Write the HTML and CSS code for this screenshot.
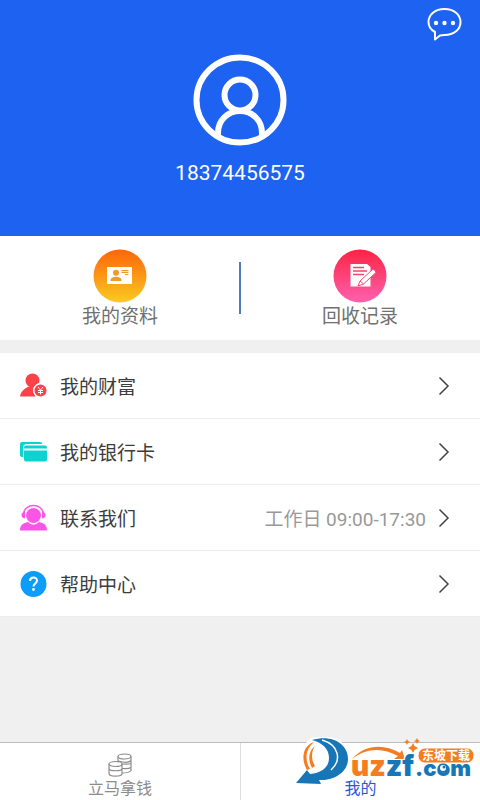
FILE: index.html
```html
<!DOCTYPE html>
<html lang="zh-CN">
<head>
<meta charset="utf-8">
<meta name="viewport" content="width=device-width, initial-scale=1">
<title>我的</title>
<link rel="stylesheet" href="styles.css">
</head>
<body>
<header class="profile">
  <button class="chat" type="button" aria-label="消息">
    <svg width="36" height="36" viewBox="0 0 36 36" fill="none">
      <path d="M9 27C5 25 2.500 21.500 2.500 17C2.500 9.500 9 4 18.500 4S34.500 9.500 34.500 17S28 30 18.500 30Q16 30 14 30.500Q12 32 9 34.500Z" transform="translate(0 -1)" stroke="#fff" stroke-width="2" stroke-linejoin="round"/>
      <g fill="#fff"><circle cx="10" cy="17" r="2.200"/><circle cx="18.500" cy="17" r="2.200"/><circle cx="27" cy="17" r="2.200"/></g>
    </svg>
  </button>
  <svg class="avatar" width="94" height="92" viewBox="0 0 94 92" fill="none" stroke="#fff" stroke-width="6">
    <ellipse cx="47" cy="46" rx="43.500" ry="42.500"/>
    <circle cx="47" cy="41" r="15.500"/>
    <path d="M25 82V79C25 66 35 57 47 57S69 66 69 79V82"/>
  </svg>
  <p class="phone">18374456575</p>
</header>

<nav class="shortcuts">
  <a class="shortcut" href="#info">
    <svg width="54" height="54" viewBox="0 0 54 54">
      <defs><linearGradient id="orange" x2="0" y2="1"><stop stop-color="#ff6508"/><stop offset="1" stop-color="#f9cb20"/></linearGradient></defs>
      <circle cx="27" cy="27" r="26.500" fill="url(#orange)"/>
      <path fill="#fff" d="M14 18H39V35H14Z"/>
      <g fill="#f09a28"><circle cx="23" cy="23.800" r="3"/><path d="M17.500 31.500C17.500 26.500 28.500 26.500 28.500 31.500V32H17.500Z"/><path d="M28.500 21H35.500V22.200H28.500ZM28.500 23H35.500V24H28.500ZM32 25H35.500V26H32Z"/></g>
    </svg>
    <span>我的资料</span>
  </a>
  <a class="shortcut" href="#records">
    <svg width="54" height="54" viewBox="0 0 54 54">
      <defs><linearGradient id="pink" x2="0" y2="1"><stop stop-color="#fb2443"/><stop offset="1" stop-color="#ff61af"/></linearGradient></defs>
      <circle cx="27" cy="27" r="26.500" fill="url(#pink)"/>
      <path fill="#fff" d="M17.500 15H34L37.500 18V37.500H17.500Z"/>
      <path stroke="#fb4268" stroke-width="1.600" d="M20 18.500H31M20 22H34M20 25.500H31"/>
      <path fill="#fff" stroke="#fb4872" stroke-width="1" stroke-linejoin="round" d="M25 37L27 32L39.500 20.500Q42 20 43 23.500L30.500 35Z"/>
      <path stroke="#fb4872" stroke-width="1" d="M27 32L30.500 35"/>
    </svg>
    <span>回收记录</span>
  </a>
</nav>

<main class="menu">
  <a class="row" href="#wealth">
    <svg width="28" height="28" viewBox="0 0 28 28">
      <g fill="#fb4248"><circle cx="12.500" cy="8.500" r="7"/><path d="M0 24.500C1 18 6 16 9 14.500H16L20 18L15 24.500Z"/></g>
      <circle cx="20.500" cy="18.500" r="6.800" fill="#fb4248" stroke="#fff" stroke-width="1.500"/>
      <path d="M18 15L20.500 18L23 15M18 18.500H23M18 20.500H23M20.500 18V22.500" fill="none" stroke="#fff"/>
    </svg>
    <span class="label">我的财富</span>
    <svg class="arrow" width="12" height="20" viewBox="0 0 12 20"><path d="M1.500 1.500L10 10L1.500 18.500"/></svg>
  </a>
  <a class="row" href="#cards">
    <svg width="28" height="28" viewBox="0 0 28 28" fill="#0bd3cf">
      <path d="M2 4H20Q22 4 22.500 6H7Q3 6 3 10V19Q0 19 0 17V6Q0 4 2 4Z"/>
      <path d="M6 7.500H25Q27 7.500 27 9.500V10.500H4V9.500Q4 7.500 6 7.500Z"/>
      <path d="M4 12.500H27V21.500Q27 23.500 25 23.500H6Q4 23.500 4 21.500Z"/>
    </svg>
    <span class="label">我的银行卡</span>
    <svg class="arrow" width="12" height="20" viewBox="0 0 12 20"><path d="M1.500 1.500L10 10L1.500 18.500"/></svg>
  </a>
  <a class="row" href="#contact">
    <svg width="28" height="28" viewBox="0 0 28 28" fill="#fc55e5">
      <circle cx="13.500" cy="11.500" r="7.500"/>
      <path d="M3.500 10.500C4 -1.500 23 -1.500 23.500 10.500" fill="none" stroke="#fc55e5" stroke-width="1.500"/>
      <path d="M5 8V14.500Q1.500 14 1.500 11T5 8ZM22 8V14.500Q25.500 14 25.500 11T22 8Z"/>
      <path d="M0 26.500C0 21 3 19 8 18Q13.500 23.500 19 18C24 19 27 21 27 26.500Z"/>
    </svg>
    <span class="label">联系我们</span>
    <span class="hours">工作日 09:00-17:30</span>
    <svg class="arrow" width="12" height="20" viewBox="0 0 12 20"><path d="M1.500 1.500L10 10L1.500 18.500"/></svg>
  </a>
  <a class="row" href="#help">
    <svg width="28" height="28" viewBox="0 0 28 28">
      <circle cx="13.500" cy="14" r="13" fill="#0c9cf9"/>
      <path d="M10 11C10 6.500 17 6.500 17 10.500C17 13.500 13.500 13.500 13.500 16.500" fill="none" stroke="#fff" stroke-width="2"/>
      <circle cx="13.500" cy="19.500" r="1.400" fill="#fff"/>
    </svg>
    <span class="label">帮助中心</span>
    <svg class="arrow" width="12" height="20" viewBox="0 0 12 20"><path d="M1.500 1.500L10 10L1.500 18.500"/></svg>
  </a>
</main>

<footer class="tabs">
  <a class="tab" href="#money">
    <svg width="24" height="24" viewBox="0 0 24 24" fill="none" stroke="#8c8c8c" stroke-width="1.200">
      <ellipse cx="16.500" cy="3.500" rx="6.500" ry="2.500"/>
      <path d="M10 3.500V9M23 3.500V17.500Q21 20 14 20M10.500 8Q20 11 23 7.500M14 11Q21 11.500 23 10.500M14 15.500Q21 16 23 14.500"/>
      <ellipse cx="7.500" cy="11" rx="6.500" ry="2.500"/>
      <path d="M1 11V20.500C1 24 14 24 14 20.500V11M1 15.500C1 18.500 14 18.500 14 15.500"/>
    </svg>
    <span>立马拿钱</span>
  </a>
  <a class="tab active" href="#me"><span>我的</span></a>
  <svg class="badge" width="184" height="54" viewBox="0 0 184 54">
    <path fill="#fff" d="M16 1C36-5 55 5 55 22C55 37 40 47 25 47L0 47L10 32C4 20 8 6 16 1Z"/>
    <path fill="#f57c20" d="M19 5C7 9 6 23 12 33L15 32C9 22 11 12 19 5ZM20 9C13 14 13 24 17 31L20 29C16 22 16 15 20 9Z"/>
    <path fill="#1676b8" d="M17 3C36-3 53 6 53 22C53 35 39 44 24 43L26 47L1 46L12 33L15 37C27 36 34 30 34 21C34 12 28 6 17 3Z"/>
    <path fill="none" stroke="#fff" stroke-width="1.500" d="M27 3C44 8 47 23 36 33"/>
    <path fill="#f57c20" d="M57 22C69 8 88 6 105 16L107 13L110 22L99 22L103 19C87 10 71 11 57 22Z"/>
    <g fill="#f57c20"><path d="M118 6L119.500 9L123 11L119.500 13L118 16L116.500 13L113 11L116.500 9Z"/><path d="M112 2L113 4L115 5L113 6L112 8L111 6L109 5L111 4Z"/><path d="M122 1L123 3L125 4L123 5L122 7L121 5L119 4L121 3Z"/></g>
    <g class="wordmark" stroke="#fff" stroke-width="2" paint-order="stroke">
      <text class="word" x="56" y="39" fill="#f57c20">uz<tspan fill="#1676b8">zf</tspan></text>
      <text class="domain" x="120" y="39" fill="#1676b8">.com</text>
    </g>
    <circle cx="148" cy="31" r="5" fill="#1676b8"/><circle cx="148" cy="31" r="3" fill="#fff"/><circle cx="149" cy="30" r="1.500" fill="#1676b8"/>
    <rect x="123" y="11" width="56" height="15" rx="7" fill="#f57c20" stroke="#fff"/>
    <text class="stamp" x="127" y="23" fill="#fff">东坡下载</text>
  </svg>
</footer>
</body>
</html>
```
FILE: styles.css
```css
* {
  box-sizing: border-box;
}

body {
  margin: 0;
  min-height: 100vh;
  display: flex;
  flex-direction: column;
  background: #f0f0f0;
  font-family: Roboto, "Noto Sans CJK SC", sans-serif;
  font-size: 19px;
  line-height: 28px;
}

a {
  color: inherit;
  text-decoration: none;
}

svg {
  display: block;
  flex: none;
}

.profile {
  position: relative;
  display: flex;
  flex-direction: column;
  align-items: center;
  gap: 12px;
  padding: 54px 0 48px;
  background: #1e62f2;
  color: #fff;
}

.chat {
  position: absolute;
  top: 6px;
  right: 18px;
  padding: 0;
  border: 0;
  background: none;
}

.phone {
  margin: 0;
  font-size: 21px;
  line-height: 30px;
}

.shortcuts {
  position: relative;
  display: grid;
  grid-template-columns: 1fr 1fr;
  padding: 13px 0 9px;
  background: #fff;
  color: #707070;
}

.shortcuts::after {
  content: "";
  position: absolute;
  top: 26px;
  bottom: 26px;
  left: 50%;
  width: 2px;
  margin-left: -1px;
  background: #507ab5;
}

.shortcut {
  display: flex;
  flex-direction: column;
  align-items: center;
}

.menu {
  margin-top: 13px;
  background: #fff;
  color: #3c3c3c;
}

.row {
  display: flex;
  align-items: center;
  gap: 12px;
  height: 66px;
  padding: 0 30px 0 20px;
  border-bottom: 1px solid #ececec;
}

.label,
.hours {
  padding-top: 5px;
}

.label {
  flex: 1;
}

.hours {
  color: #999;
}

.arrow {
  fill: none;
  stroke: #444;
  stroke-width: 1.5px;
}

.tabs {
  position: relative;
  display: grid;
  grid-template-columns: 1fr 1fr;
  margin-top: auto;
  border-top: 1px solid #bbb;
  background: #fff;
  color: #8c8c8c;
  font-size: 16px;
  line-height: 23px;
}

.tab {
  display: flex;
  flex-direction: column;
  align-items: center;
  justify-content: flex-end;
  padding-top: 10px;
}

.active {
  border-left: 1px solid #ddd;
  color: #2c56d6;
}

.badge {
  position: absolute;
  right: 1px;
  top: -6px;
}

.wordmark {
  font-family: Inter, sans-serif;
  font-weight: 900;
}

.word {
  font-size: 28px;
}

.domain {
  font-size: 22px;
}

.stamp {
  font-size: 12px;
  font-weight: 700;
}
```
